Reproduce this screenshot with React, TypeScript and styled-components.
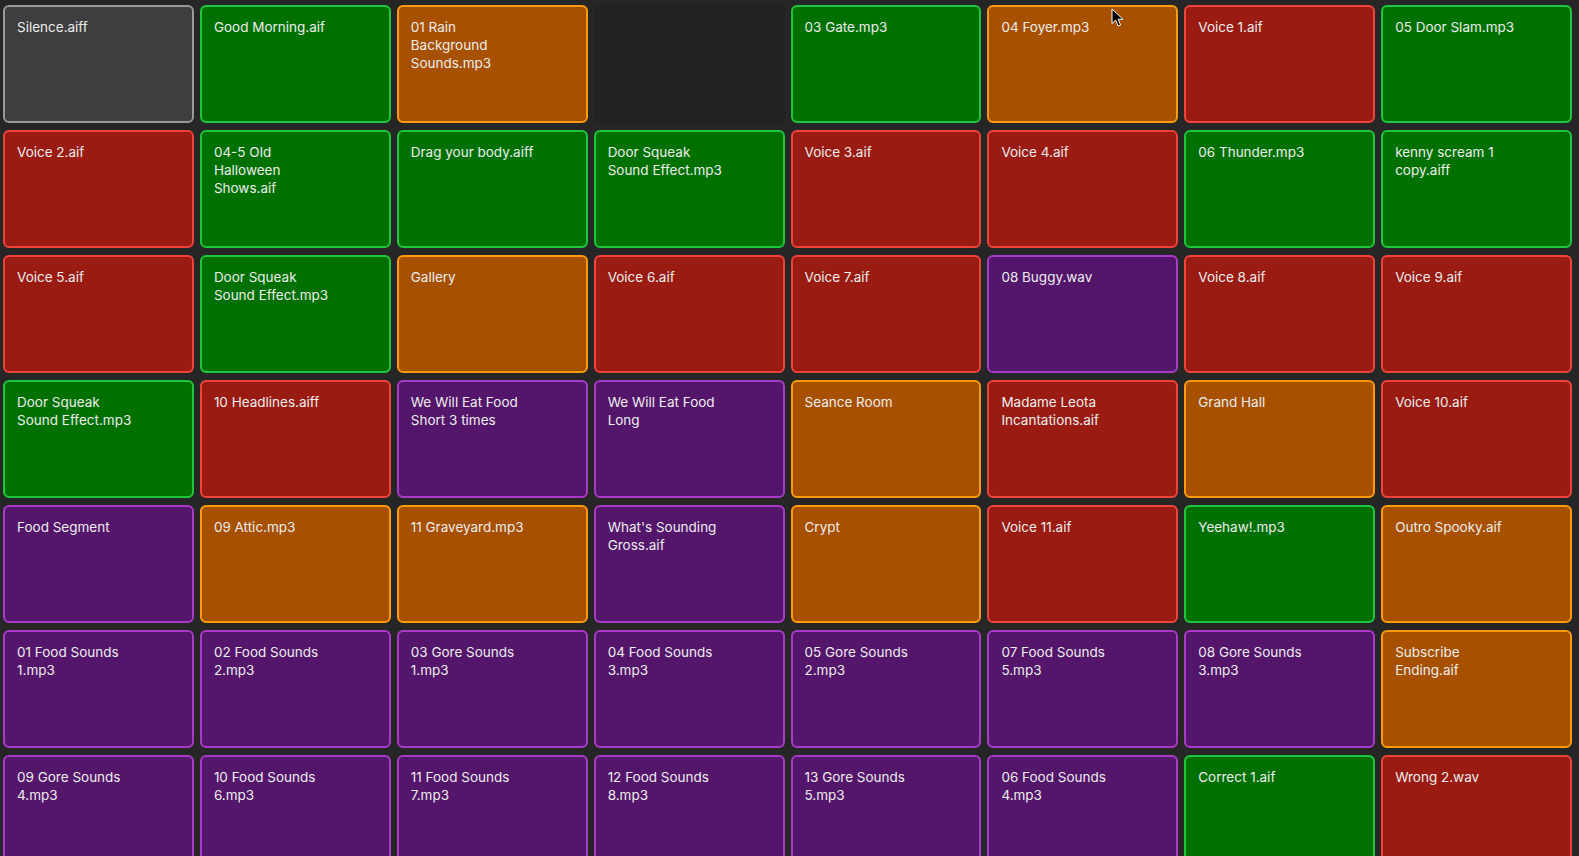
import React from "react";
import styled, { createGlobalStyle } from "styled-components";

type Tone = "grey" | "green" | "orange" | "red" | "purple" | "empty";

const palette: Record<Tone, { bg: string; border: string }> = {
  grey: { bg: "#3e3e40", border: "#99989d" },
  green: { bg: "#007100", border: "#1ec73a" },
  orange: { bg: "#a65000", border: "#ff9b0a" },
  red: { bg: "#991b12", border: "#f2433b" },
  purple: { bg: "#54166b", border: "#a93ac7" },
  empty: { bg: "#212224", border: "#212224" },
};

const Global = createGlobalStyle`
  html, body { margin: 0; padding: 0; background: #262626; }
  body { font-family: Inter, "Noto Sans", "Liberation Sans", sans-serif; overflow: hidden; }
`;

const Board = styled.div`
  position: relative;
  display: grid;
  grid-template-columns: repeat(8, 1fr);
  grid-auto-rows: 118px;
  column-gap: 6px;
  row-gap: 7px;
  padding: 5px 7px 0 3px;
  height: 856px;
  box-sizing: border-box;
  overflow: hidden;
  background: #262626;
`;

const Pad = styled.button<{ $tone: Tone }>`
  box-sizing: border-box;
  margin: 0;
  display: flex;
  align-items: flex-start;
  text-align: left;
  padding: 11px 12px;
  border: 2px solid ${(p) => palette[p.$tone].border};
  border-radius: 6px;
  background: ${(p) => palette[p.$tone].bg};
  color: #ededed;
  font-family: Inter, "Noto Sans", "Liberation Sans", sans-serif;
  font-size: 13.5px;
  line-height: 18px;
  white-space: pre;
  cursor: default;
`;

const Cursor = styled.svg`
  position: absolute;
  left: 1111px;
  top: 8px;
  width: 13px;
  height: 19px;
  pointer-events: none;
`;

const G = "green", O = "orange", R = "red", P = "purple";

const pads: [string, Tone][] = [
  ["Silence.aiff", "grey"],
  ["Good Morning.aif", G],
  ["01 Rain\nBackground\nSounds.mp3", O],
  ["", "empty"],
  ["03 Gate.mp3", G],
  ["04 Foyer.mp3", O],
  ["Voice 1.aif", R],
  ["05 Door Slam.mp3", G],

  ["Voice 2.aif", R],
  ["04-5 Old\nHalloween\nShows.aif", G],
  ["Drag your body.aiff", G],
  ["Door Squeak\nSound Effect.mp3", G],
  ["Voice 3.aif", R],
  ["Voice 4.aif", R],
  ["06 Thunder.mp3", G],
  ["kenny scream 1\ncopy.aiff", G],

  ["Voice 5.aif", R],
  ["Door Squeak\nSound Effect.mp3", G],
  ["Gallery", O],
  ["Voice 6.aif", R],
  ["Voice 7.aif", R],
  ["08 Buggy.wav", P],
  ["Voice 8.aif", R],
  ["Voice 9.aif", R],

  ["Door Squeak\nSound Effect.mp3", G],
  ["10 Headlines.aiff", R],
  ["We Will Eat Food\nShort 3 times", P],
  ["We Will Eat Food\nLong", P],
  ["Seance Room", O],
  ["Madame Leota\nIncantations.aif", R],
  ["Grand Hall", O],
  ["Voice 10.aif", R],

  ["Food Segment", P],
  ["09 Attic.mp3", O],
  ["11 Graveyard.mp3", O],
  ["What's Sounding\nGross.aif", P],
  ["Crypt", O],
  ["Voice 11.aif", R],
  ["Yeehaw!.mp3", G],
  ["Outro Spooky.aif", O],

  ["01 Food Sounds\n1.mp3", P],
  ["02 Food Sounds\n2.mp3", P],
  ["03 Gore Sounds\n1.mp3", P],
  ["04 Food Sounds\n3.mp3", P],
  ["05 Gore Sounds\n2.mp3", P],
  ["07 Food Sounds\n5.mp3", P],
  ["08 Gore Sounds\n3.mp3", P],
  ["Subscribe\nEnding.aif", O],

  ["09 Gore Sounds\n4.mp3", P],
  ["10 Food Sounds\n6.mp3", P],
  ["11 Food Sounds\n7.mp3", P],
  ["12 Food Sounds\n8.mp3", P],
  ["13 Gore Sounds\n5.mp3", P],
  ["06 Food Sounds\n4.mp3", P],
  ["Correct 1.aif", G],
  ["Wrong 2.wav", R],
];

export default function App() {
  return (
    <>
      <Global />
      <Board>
        {pads.map(([label, tone], i) => (
          <Pad key={i} $tone={tone}>
            {label}
          </Pad>
        ))}
        <Cursor viewBox="0 0 13 19">
          <path
            d="M1 1 L1 15.5 L4.6 12.2 L7.2 18 L9.6 17 L7.1 11.3 L12 11.3 Z"
            fill="#000"
            stroke="#fff"
            strokeWidth="1"
            strokeLinejoin="round"
          />
        </Cursor>
      </Board>
    </>
  );
}
